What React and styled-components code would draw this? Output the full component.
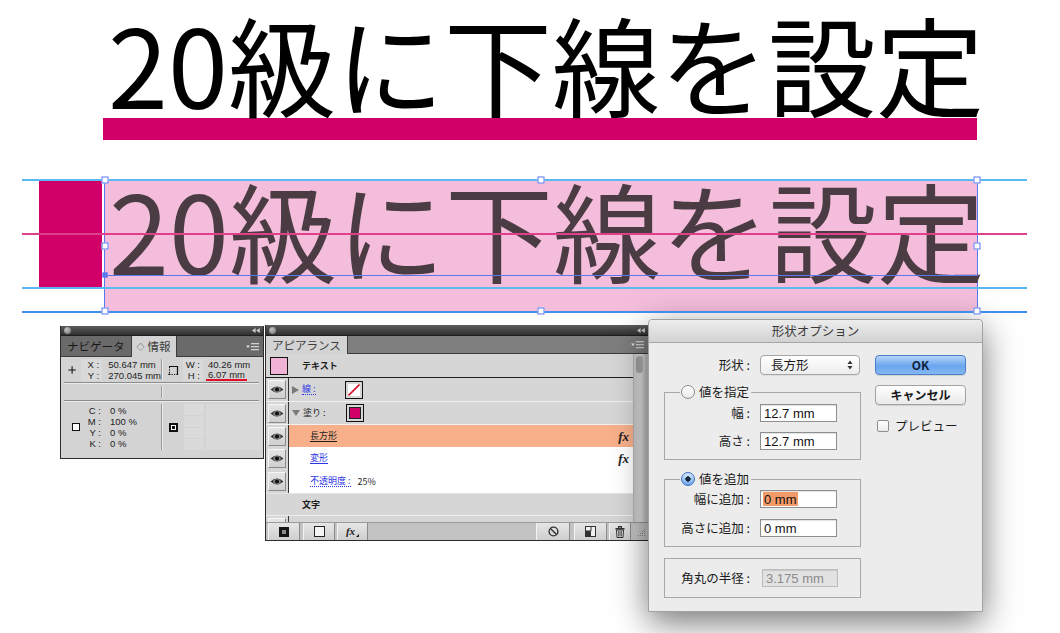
import React from "react"
import styled, { createGlobalStyle } from "styled-components"

const jp = `"Noto Sans CJK JP", "Noto Sans", sans-serif`
const latin = `"Liberation Sans", "Noto Sans CJK JP", sans-serif`

const GlobalStyle = createGlobalStyle`
  * { box-sizing: border-box; }
  html, body { margin: 0; padding: 0; background: #fff; }
  body { font-family: ${jp}; overflow: hidden; }
`

const Page = styled.div`
  width: 1060px;
  height: 633px;
  display: flex;
  flex-direction: column;
  overflow: hidden;
`

/* ---------- heading ---------- */

const Heading = styled.header`
  flex: none;
  height: 170px;
  padding: 0 0 0 103px;
`

const HeadingText = styled.h1`
  margin: 0 0 -6px;
  padding-left: 5px;
  font: 400 108px/124px ${jp};
  color: #000;
  white-space: nowrap;
`

const HeadingBar = styled.div`
  width: 874px;
  height: 22px;
  background: #d10068;
`

/* ---------- artboard ---------- */

const Artboard = styled.div`
  flex: none;
  position: relative;
  height: 148px;
`

const Guide = styled.div`
  position: absolute;
  left: 22px;
  width: 1005px;
  top: ${({ $y }) => $y}px;
  height: 1.5px;
  background: ${({ $color }) => $color};
  z-index: 3;
`

const MarkBlock = styled.div`
  position: absolute;
  left: 39px;
  top: 10px;
  width: 63px;
  height: 107px;
  background: #d10068;
`

const Selection = styled.div`
  position: absolute;
  left: 104px;
  top: 9px;
  width: 874px;
  height: 133px;
  background: #f3bddb;
  border: 1px solid #5a78ee;
`

const SelectionText = styled.div`
  margin: -14px 0 0;
  padding-left: 4px;
  font: 400 108px/124px ${jp};
  color: #4b3c44;
  white-space: nowrap;
`

const Baseline = styled.div`
  position: absolute;
  left: -1px;
  right: -1px;
  top: 95px;
  height: 1px;
  background: #5a78ee;
  z-index: 4;
`

const Handle = styled.span`
  position: absolute;
  left: ${({ $x }) => $x};
  top: ${({ $y }) => $y};
  width: ${({ $filled }) => ($filled ? 5 : 7)}px;
  height: ${({ $filled }) => ($filled ? 5 : 7)}px;
  transform: translate(-50%, -50%);
  background: ${({ $filled }) => ($filled ? "#5a78ee" : "#fff")};
  border: 1px solid #5a78ee;
  z-index: 5;
`

/* ---------- workspace windows ---------- */

const Workspace = styled.div`
  flex: 1;
  position: relative;
`

const Window = styled.section`
  position: absolute;
  left: ${({ $x }) => $x}px;
  top: ${({ $y }) => $y}px;
  width: ${({ $w }) => $w}px;
  height: ${({ $h }) => $h}px;
  display: flex;
  flex-direction: column;
  background: #d3d3d3;
  border: 1px solid #2b2b2b;
  border-top: none;
  overflow: hidden;
`

const WinBar = styled.div`
  flex: none;
  height: ${({ $h }) => $h}px;
  display: flex;
  align-items: center;
  justify-content: space-between;
  padding: 0 3px;
  background: linear-gradient(#5c5c5c, #303030);
  border-bottom: 1px solid #1e1e1e;
`

const WinDot = styled.span`
  width: 7px;
  height: 7px;
  border-radius: 50%;
  background: radial-gradient(circle at 40% 35%, #c4c4c4, #6a6a6a);
`

const TabStrip = styled.div`
  flex: none;
  height: ${({ $h }) => $h}px;
  display: flex;
  align-items: stretch;
  background: ${({ $tone }) => $tone};
  border-bottom: 1px solid #3c3c3c;
`

const Tab = styled.div`
  display: flex;
  align-items: center;
  gap: 3px;
  padding: 1px ${({ $pad }) => $pad}px 0;
  font: 400 11.5px/1 ${jp};
  color: ${({ $active }) => ($active ? "#3c3c3c" : "#161616")};
  background: ${({ $active }) => ($active ? "#d3d3d3" : "transparent")};
  border-right: 1px solid #3c3c3c;
  margin-bottom: ${({ $active }) => ($active ? "-1px" : "0")};
`

const TabFill = styled.div`
  flex: 1;
  display: flex;
  align-items: center;
  justify-content: flex-end;
  padding-right: 4px;
`

const Collapse = () => (
  <svg width="8" height="5" viewBox="0 0 8 5">
    <path d="M3.6 0 L0 2.5 L3.6 5Z M7.8 0 L4.2 2.5 L7.8 5Z" fill="#cfcfcf" />
  </svg>
)

const MenuIcon = () => (
  <svg width="13" height="9" viewBox="0 0 13 9">
    <path d="M0 3.5 h4 l-2 2.4z" fill="#e2e2e2" />
    <rect x="5" y="1" width="8" height="1.3" fill="#d0d0d0" />
    <rect x="5" y="4" width="8" height="1.3" fill="#d0d0d0" />
    <rect x="5" y="7" width="8" height="1.3" fill="#d0d0d0" />
  </svg>
)

/* ---------- info panel ---------- */

const InfoBody = styled.div`
  flex: 1;
  display: flex;
  flex-direction: column;
  font: 400 9.5px/11px ${latin};
  color: #222;
`

const InfoRow = styled.div`
  flex: none;
  display: flex;
  height: ${({ $h }) => $h}px;
`

const InfoCell = styled.div`
  display: flex;
  align-items: center;
  gap: ${({ $gap }) => $gap || 0}px;
  width: ${({ $w }) => ($w ? `${$w}px` : "auto")};
  flex: ${({ $w }) => ($w ? "none" : 1)};
  padding-left: ${({ $pad }) => $pad || 0}px;
`

const VRule = styled.div`
  width: 2px;
  flex: none;
  margin: 2px 0;
  border-left: 1px solid #9a9a9a;
  border-right: 1px solid #ececec;
`

const HRule = styled.div`
  flex: none;
  height: 2px;
  margin: 0 4px 0 3px;
  border-top: 1px solid #8c8c8c;
  border-bottom: 1px solid #ececec;
`

const LabelCol = styled.div`
  width: ${({ $w }) => $w}px;
  flex: none;
  display: flex;
  flex-direction: column;
  align-items: flex-end;
  padding-right: 3px;
  background: ${({ $plain }) => ($plain ? "none" : "#d9d9d9")};
`

const ValueCol = styled.div`
  flex: 1;
  display: flex;
  flex-direction: column;
  padding-left: ${({ $pad }) => $pad || 1}px;
  white-space: nowrap;
`

const RedUnder = styled.span`
  align-self: flex-start;
  margin-left: -2px;
  padding: 0 2px;
  line-height: 9px;
  border-bottom: 2px solid #e0102c;
`

const SwatchGrid = styled.div`
  display: flex;
  gap: 2px;
  align-self: stretch;
  padding: 2px 0;
`

const SmallCells = styled.div`
  width: 20px;
  display: flex;
  flex-direction: column;
  gap: 1px;
`

const SmallCell = styled.div`
  flex: 1;
  background: #dadada;
`

const BigCell = styled.div`
  width: 56px;
  background: #d9d9d9;
`

const PlusIcon = () => (
  <svg width="10" height="10" viewBox="0 0 10 10">
    <path d="M5 0.5 V9.5 M0.5 5 H9.5" stroke="#111" strokeWidth="1.3" />
  </svg>
)

const SizeIcon = () => (
  <svg width="12" height="12" viewBox="0 0 12 12">
    <path d="M1 2.5 H9.5 V11" fill="none" stroke="#111" strokeWidth="1.2" />
    <path d="M1.5 3 V10.5 H9" fill="none" stroke="#111" strokeWidth="1" strokeDasharray="1.2 1.2" />
    <path d="M0 11 L2.5 11 L1.25 9Z" fill="#111" />
  </svg>
)

const FillIcon = () => (
  <svg width="8" height="8" viewBox="0 0 8 8">
    <rect x="0.5" y="0.5" width="7" height="7" fill="#fff" stroke="#111" />
  </svg>
)

const StrokeIcon = () => (
  <svg width="9" height="9" viewBox="0 0 9 9">
    <rect x="0" y="0" width="9" height="9" fill="#111" />
    <rect x="2" y="2" width="5" height="5" fill="#fff" />
    <rect x="3" y="3" width="3" height="3" fill="#111" />
  </svg>
)

/* ---------- appearance panel ---------- */

const AppList = styled.div`
  flex: 1;
  display: flex;
  min-height: 0;
`

const AppRows = styled.div`
  flex: 1;
  display: flex;
  flex-direction: column;
  overflow: hidden;
  font: 400 9px/1 ${jp};
  color: #1d1d1d;
`

const AppRow = styled.div`
  flex: none;
  display: flex;
  height: ${({ $h }) => $h}px;
  background: ${({ $bg }) => $bg || "#d6d6d6"};
  border-bottom: ${({ $rule }) => $rule || "none"};
`

const EyeCell = styled.div`
  width: 23px;
  flex: none;
  display: flex;
  align-items: center;
  justify-content: center;
  background: #d6d6d6;
  border-right: 1px solid #333;
`

const EyeBox = styled.div`
  width: 18px;
  height: 19px;
  display: flex;
  align-items: center;
  justify-content: center;
  background: linear-gradient(#e4e4e4, #cfcfcf);
  border: 1px solid;
  border-color: #f6f6f6 #8a8a8a #8a8a8a #f6f6f6;
`

const SwatchCell = styled.div`
  width: 23px;
  flex: none;
  display: flex;
  align-items: center;
  padding-left: 4px;
`

const RowBody = styled.div`
  flex: 1;
  display: flex;
  align-items: center;
  gap: ${({ $gap }) => $gap || 0}px;
  padding-left: ${({ $indent }) => $indent}px;
  padding-right: 4px;
  font-weight: ${({ $bold }) => ($bold ? 700 : 400)};
`

const Caret = styled.span`
  width: 0;
  height: 0;
  border-style: solid;
  border-color: transparent;
  ${({ $open }) =>
    $open
      ? "border-width: 6px 4px 0 4px; border-top-color: #7a7a7a;"
      : "border-width: 4px 0 4px 7px; border-left-color: #7a7a7a;"}
  margin-right: 3px;
`

const LabelSlot = styled.span`
  width: 43px;
  flex: none;
  display: flex;
`

const AttrLink = styled.span`
  color: ${({ $plain }) => ($plain ? "#1d1d1d" : "#2b33e6")};
  padding-bottom: 1px;
  border-bottom: 1px ${({ $line }) => $line || "none"}
    ${({ $plain }) => ($plain ? "#1d1d1d" : "#2b33e6")};
`

const Swatch = styled.span`
  width: 18px;
  height: 18px;
  flex: none;
  display: flex;
  padding: ${({ $bare }) => ($bare ? 0 : 2)}px;
  background: ${({ $fill }) => $fill || "#d6d6d6"};
  border: 1px solid #111;
`

const SwatchInner = styled.span`
  flex: 1;
  background: ${({ $color }) => $color};
  border: 1px solid #222;
`

const FxMark = styled.span`
  margin-left: auto;
  font: italic 700 13px/1 "Liberation Serif", serif;
  color: #222;
`

const Scrollbar = styled.div`
  width: 12px;
  flex: none;
  padding: 2px 2px 0;
  background: linear-gradient(to right, #c7c7c7, #e2e2e2 60%, #d0d0d0);
  border-left: 1px solid #b5b5b5;
`

const Thumb = styled.div`
  height: 17px;
  border-radius: 4px;
  background: linear-gradient(to right, #9d9d9d, #b8b8b8);
`

const RightEdge = styled.div`
  width: 3px;
  flex: none;
  background: #c9c9c9;
`

const AppFooter = styled.div`
  flex: none;
  height: 18px;
  display: flex;
  align-items: stretch;
  padding: 0 0 0 2px;
  background: #c3c3c3;
  border-top: 1px solid #9a9a9a;
`

const FootBtn = styled.div`
  width: ${({ $w }) => $w}px;
  flex: none;
  display: flex;
  align-items: center;
  justify-content: center;
  margin-right: ${({ $gap }) => $gap ?? 2}px;
  background: ${({ $flat }) => ($flat ? "#c8c8c8" : "linear-gradient(#e6e6e6, #cecece)")};
  border-left: 1px solid ${({ $flat }) => ($flat ? "transparent" : "#f2f2f2")};
  border-right: 1px solid ${({ $flat }) => ($flat ? "transparent" : "#8a8a8a")};
`

const FootGap = styled.div`
  flex: 1;
`

const FootFx = styled.span`
  font: italic 700 11px/1 "Liberation Serif", serif;
  color: #222;
  display: flex;
  align-items: flex-end;
  gap: 1px;
`

const Eye = () => (
  <svg width="14" height="9" viewBox="0 0 14 9">
    <path d="M0.6 4.6 Q7 -1.6 13.4 4.6 Q7 10.4 0.6 4.6Z" fill="#2a2a2a" />
    <ellipse cx="7" cy="4.5" rx="3.8" ry="2.6" fill="#8a8a8a" />
    <circle cx="7" cy="4.5" r="2.1" fill="#111" />
  </svg>
)

const NoStroke = () => (
  <svg width="12" height="12" viewBox="0 0 12 12" style={{ flex: 1 }}>
    <rect width="12" height="12" fill="#fff" />
    <path d="M0.5 11.5 L11.5 0.5" stroke="#d8102a" strokeWidth="1.6" />
  </svg>
)

const IconNewStroke = () => (
  <svg width="10" height="10" viewBox="0 0 10 10">
    <rect width="10" height="10" fill="#151515" />
    <rect x="3" y="3" width="4" height="4" fill="#8c8c8c" />
  </svg>
)

const IconNewFill = () => (
  <svg width="11" height="11" viewBox="0 0 11 11">
    <rect x="0.5" y="0.5" width="10" height="10" fill="#f4f4f4" stroke="#222" />
  </svg>
)

const IconClear = () => (
  <svg width="11" height="11" viewBox="0 0 11 11">
    <circle cx="5.5" cy="5.5" r="4.4" fill="none" stroke="#333" strokeWidth="1.4" />
    <path d="M2.4 2.4 L8.6 8.6" stroke="#333" strokeWidth="1.4" />
  </svg>
)

const IconDuplicate = () => (
  <svg width="11" height="11" viewBox="0 0 11 11">
    <rect x="0.5" y="0.5" width="10" height="10" fill="#f1f1f1" stroke="#333" />
    <rect x="1" y="5" width="5" height="5" fill="#333" />
    <path d="M6 1 V5 H1" fill="none" stroke="#333" />
  </svg>
)

const IconTrash = () => (
  <svg width="10" height="12" viewBox="0 0 10 12">
    <rect x="3.5" y="0.5" width="3" height="1.5" fill="none" stroke="#333" />
    <rect x="0.5" y="2" width="9" height="1.6" fill="#333" />
    <path d="M1.5 4 H8.5 L8 11.5 H2Z" fill="#e8e8e8" stroke="#333" />
    <path d="M3.6 5 V10.5 M5 5 V10.5 M6.4 5 V10.5" stroke="#333" strokeWidth="0.8" />
  </svg>
)

const gripDots = [
  [8, 2], [6, 4], [8, 4], [4, 6], [6, 6], [8, 6], [2, 8], [4, 8], [6, 8], [8, 8],
]

const IconGrip = () => (
  <svg width="10" height="10" viewBox="0 0 10 10">
    {gripDots.map(([x, y]) => (
      <rect key={`${x}-${y}`} x={x} y={y} width="1" height="1" fill="#8a8a8a" />
    ))}
  </svg>
)

const TinyCorner = () => (
  <svg width="3" height="3" viewBox="0 0 3 3">
    <path d="M3 0 V3 H0Z" fill="#222" />
  </svg>
)

/* ---------- shape options dialog ---------- */

const Dialog = styled.section`
  position: absolute;
  left: 648px;
  top: 1px;
  width: 335px;
  height: 293px;
  display: flex;
  flex-direction: column;
  background: #ececec;
  border: 1px solid #a2a2a2;
  border-radius: 4px 4px 0 0;
  box-shadow: 0 10px 34px rgba(0, 0, 0, 0.55);
  font: 400 12.5px/1 ${jp};
  color: #1a1a1a;
`

const DialogTitle = styled.header`
  flex: none;
  height: 23px;
  display: flex;
  align-items: center;
  justify-content: center;
  background: linear-gradient(#ededed, #d2d2d2);
  border-bottom: 1px solid #a6a6a6;
  border-radius: 4px 4px 0 0;
  font-size: 12.5px;
  color: #3a3a3a;
`

const DialogBody = styled.div`
  flex: 1;
  display: flex;
  gap: 14px;
  padding: 12px 0 0 15px;
`

const LeftCol = styled.div`
  width: 197px;
  display: flex;
  flex-direction: column;
`

const RightCol = styled.div`
  width: 91px;
  display: flex;
  flex-direction: column;
`

const FormRow = styled.div`
  display: flex;
  align-items: center;
  height: ${({ $h }) => $h || 18}px;
`

const FieldLabel = styled.span`
  width: ${({ $w }) => $w}px;
  flex: none;
  text-align: right;
  white-space: nowrap;
  margin-right: ${({ $gap }) => $gap || 10}px;
`

const PopUp = styled.div`
  width: 100px;
  height: 20px;
  display: flex;
  align-items: center;
  justify-content: space-between;
  padding: 0 6px 0 10px;
  background: linear-gradient(#ffffff, #ededed);
  border: 1px solid #a6a6a6;
  border-radius: 4px;
  box-shadow: 0 1px 0 rgba(0, 0, 0, 0.06);
`

const Group = styled.fieldset`
  margin: ${({ $mt }) => $mt}px 0 0;
  padding: ${({ $pad }) => $pad};
  border: 1px solid #a9a9a9;
  display: flex;
  flex-direction: column;
  gap: ${({ $gap }) => $gap || 10}px;
  min-width: 0;
`

const GroupLegend = styled.legend`
  display: flex;
  align-items: center;
  gap: 4px;
  padding: 0 2px 0 1px;
  height: 16px;
  font-size: 12.5px;
`

const Radio = styled.span`
  width: 14px;
  height: 14px;
  border-radius: 50%;
  border: 1px solid ${({ $on }) => ($on ? "#3a6cc0" : "#8c8c8c")};
  background: ${({ $on }) =>
    $on
      ? "radial-gradient(circle, #17253d 0 2.4px, transparent 2.9px), linear-gradient(#d4e6fb, #6ea6ee)"
      : "linear-gradient(#ffffff, #ebebeb)"};
`

const Field = styled.div`
  width: ${({ $w }) => $w || 77}px;
  height: 18px;
  display: flex;
  align-items: stretch;
  padding: 1px 2px;
  background: ${({ $disabled }) => ($disabled ? "#e2e2e2" : "#fff")};
  border: 1px solid ${({ $disabled }) => ($disabled ? "#bdbdbd" : "#8f8f8f")};
  box-shadow: inset 0 1px 1px rgba(0, 0, 0, 0.12);
  font: 400 13px/15px ${latin};
  color: ${({ $disabled }) => ($disabled ? "#8a8a8a" : "#111")};
  white-space: nowrap;
`

const FieldText = styled.span`
  padding: 0 1px;
  background: ${({ $selected }) => ($selected ? "#f39b68" : "transparent")};
`

const Button = styled.div`
  height: ${({ $h }) => $h}px;
  margin-top: ${({ $mt }) => $mt || 0}px;
  display: flex;
  align-items: center;
  justify-content: center;
  border-radius: 4px;
  font-weight: 700;
  font-size: 12px;
  ${({ $primary }) =>
    $primary
      ? "background: linear-gradient(#b6d5f9, #6ba5ee 55%, #86b8f3); border: 1px solid #4b7fcc; color: #10223e;"
      : "background: linear-gradient(#ffffff, #e9e9e9); border: 1px solid #a2a2a2; color: #1a1a1a;"}
  box-shadow: 0 1px 1px rgba(0, 0, 0, 0.12);
`

const CheckRow = styled.label`
  display: flex;
  align-items: center;
  gap: 6px;
  margin-top: 15px;
  padding-left: 2px;
`

const CheckBox = styled.span`
  width: 12px;
  height: 12px;
  border: 1px solid #8e8e8e;
  border-radius: 2px;
  background: linear-gradient(#fff, #ececec);
`

const PopArrows = () => (
  <svg width="6" height="10" viewBox="0 0 6 10">
    <path d="M3 0.5 L5.5 4 H0.5Z M3 9.5 L5.5 6 H0.5Z" fill="#333" />
  </svg>
)

/* ---------- assembled ---------- */

const handles = [
  ["0%", "0%"], ["50%", "0%"], ["100%", "0%"],
  ["0%", "50%"], ["100%", "50%"],
  ["0%", "100%"], ["50%", "100%"], ["100%", "100%"],
]

const InfoPanel = () => (
  <Window $x={60} $y={8} $w={204} $h={133}>
    <WinBar $h={10}>
      <WinDot />
      <Collapse />
    </WinBar>
    <TabStrip $h={21} $tone="#6a6a6a">
      <Tab $pad={6}>ナビゲータ</Tab>
      <Tab $pad={5} $active>
        <span style={{ fontSize: 8 }}>◇</span>情報
      </Tab>
      <TabFill>
        <MenuIcon />
      </TabFill>
    </TabStrip>
    <InfoBody>
      <InfoRow $h={25}>
        <InfoCell $w={100} $pad={7} $gap={5}>
          <PlusIcon />
          <LabelCol $w={21}>
            <span>X :</span>
            <span>Y :</span>
          </LabelCol>
          <ValueCol>
            <span>50.647 mm</span>
            <span>270.045 mm</span>
          </ValueCol>
        </InfoCell>
        <VRule />
        <InfoCell $pad={5} $gap={3}>
          <SizeIcon />
          <LabelCol $w={20}>
            <span>W :</span>
            <span>H :</span>
          </LabelCol>
          <ValueCol $pad={2}>
            <span>40.26 mm</span>
            <RedUnder>6.07 mm</RedUnder>
          </ValueCol>
        </InfoCell>
      </InfoRow>
      <HRule />
      <InfoRow $h={16}>
        <InfoCell $w={100} />
        <VRule />
        <InfoCell />
      </InfoRow>
      <HRule />
      <InfoRow $h={50}>
        <InfoCell $w={100} $pad={11} $gap={4}>
          <FillIcon />
          <LabelCol $w={20} $plain>
            <span>C :</span>
            <span>M :</span>
            <span>Y :</span>
            <span>K :</span>
          </LabelCol>
          <ValueCol $pad={2}>
            <span>0 %</span>
            <span>100 %</span>
            <span>0 %</span>
            <span>0 %</span>
          </ValueCol>
        </InfoCell>
        <VRule />
        <InfoCell $pad={6} $gap={6}>
          <StrokeIcon />
          <SwatchGrid>
            <SmallCells>
              <SmallCell />
              <SmallCell />
              <SmallCell />
              <SmallCell />
            </SmallCells>
            <BigCell />
          </SwatchGrid>
        </InfoCell>
      </InfoRow>
    </InfoBody>
  </Window>
)

const EyeCol = () => (
  <EyeCell>
    <EyeBox>
      <Eye />
    </EyeBox>
  </EyeCell>
)

const AppearancePanel = () => (
  <Window $x={265} $y={7} $w={384} $h={216}>
    <WinBar $h={11}>
      <WinDot />
      <Collapse />
    </WinBar>
    <TabStrip $h={18} $tone="#7e7e7e">
      <Tab $pad={6} $active>アピアランス</Tab>
      <TabFill>
        <MenuIcon />
      </TabFill>
    </TabStrip>
    <AppList>
      <AppRows>
        <AppRow $h={24} $rule="1px solid #1e1e1e">
          <SwatchCell>
            <Swatch $bare $fill="#f0b3d6" />
          </SwatchCell>
          <RowBody $indent={13} $bold>
            テキスト
          </RowBody>
        </AppRow>
        <AppRow $h={24} $rule="1px solid #f1f1f1">
          <EyeCol />
          <RowBody $indent={3}>
            <Caret />
            <LabelSlot>
              <AttrLink $line="dotted">線 :</AttrLink>
            </LabelSlot>
            <Swatch>
              <NoStroke />
            </Swatch>
          </RowBody>
        </AppRow>
        <AppRow $h={23} $rule="1px solid #f1f1f1">
          <EyeCol />
          <RowBody $indent={3}>
            <Caret $open />
            <LabelSlot>
              <AttrLink $plain>塗り :</AttrLink>
            </LabelSlot>
            <Swatch>
              <SwatchInner $color="#d10068" />
            </Swatch>
          </RowBody>
        </AppRow>
        <AppRow $h={22} $bg="#f8b08b">
          <EyeCol />
          <RowBody $indent={21}>
            <AttrLink $plain $line="solid">長方形</AttrLink>
            <FxMark>fx</FxMark>
          </RowBody>
        </AppRow>
        <AppRow $h={22} $bg="#fff">
          <EyeCol />
          <RowBody $indent={21}>
            <AttrLink $line="solid">変形</AttrLink>
            <FxMark>fx</FxMark>
          </RowBody>
        </AppRow>
        <AppRow $h={25} $bg="#fff" $rule="1px solid #e4e4e4">
          <EyeCol />
          <RowBody $indent={21} $gap={7}>
            <AttrLink $line="dotted">不透明度 :</AttrLink>
            <span>25%</span>
          </RowBody>
        </AppRow>
        <AppRow $h={22} $rule="1px solid #ededed">
          <RowBody $indent={36} $bold>
            文字
          </RowBody>
        </AppRow>
        <AppRow $h={22}>
          <EyeCol />
          <RowBody $indent={21} />
        </AppRow>
      </AppRows>
      <Scrollbar>
        <Thumb />
      </Scrollbar>
      <RightEdge />
    </AppList>
    <AppFooter>
      <FootBtn $w={32} $gap={3}>
        <IconNewStroke />
      </FootBtn>
      <FootBtn $w={32} $gap={2}>
        <IconNewFill />
      </FootBtn>
      <FootBtn $w={31}>
        <FootFx>
          fx
          <TinyCorner />
        </FootFx>
      </FootBtn>
      <FootGap />
      <FootBtn $w={34} $gap={4}>
        <IconClear />
      </FootBtn>
      <FootBtn $w={33} $gap={2}>
        <IconDuplicate />
      </FootBtn>
      <FootBtn $w={22} $gap={2}>
        <IconTrash />
      </FootBtn>
      <FootBtn $w={15} $gap={0} $flat>
        <IconGrip />
      </FootBtn>
    </AppFooter>
  </Window>
)

const ShapeDialog = () => (
  <Dialog>
    <DialogTitle>形状オプション</DialogTitle>
    <DialogBody>
      <LeftCol>
        <FormRow $h={20}>
          <FieldLabel $w={86}>形状 :</FieldLabel>
          <PopUp>
            <span>長方形</span>
            <PopArrows />
          </PopUp>
        </FormRow>

        <Group $mt={9} $pad="4px 0 9px 15px">
          <GroupLegend>
            <Radio />
            値を指定
          </GroupLegend>
          <FormRow>
            <FieldLabel $w={70}>幅 :</FieldLabel>
            <Field>
              <FieldText>12.7 mm</FieldText>
            </Field>
          </FormRow>
          <FormRow>
            <FieldLabel $w={70}>高さ :</FieldLabel>
            <Field>
              <FieldText>12.7 mm</FieldText>
            </Field>
          </FormRow>
        </Group>

        <Group $mt={11} $pad="3px 0 9px 15px" $gap={11}>
          <GroupLegend>
            <Radio $on />
            値を追加
          </GroupLegend>
          <FormRow>
            <FieldLabel $w={70}>幅に追加 :</FieldLabel>
            <Field>
              <FieldText $selected>0 mm</FieldText>
            </Field>
          </FormRow>
          <FormRow>
            <FieldLabel $w={70}>高さに追加 :</FieldLabel>
            <Field>
              <FieldText>0 mm</FieldText>
            </Field>
          </FormRow>
        </Group>

        <Group $mt={11} $pad="10px 0 10px 15px">
          <FormRow>
            <FieldLabel $w={70} $gap={12}>
              角丸の半径 :
            </FieldLabel>
            <Field $w={76} $disabled>
              <FieldText>3.175 mm</FieldText>
            </Field>
          </FormRow>
        </Group>
      </LeftCol>

      <RightCol>
        <Button $h={20} $primary>
          OK
        </Button>
        <Button $h={20} $mt={10}>
          キャンセル
        </Button>
        <CheckRow>
          <CheckBox />
          プレビュー
        </CheckRow>
      </RightCol>
    </DialogBody>
  </Dialog>
)

const App = () => (
  <>
    <GlobalStyle />
    <Page>
      <Heading>
        <HeadingText>20級に下線を設定</HeadingText>
        <HeadingBar />
      </Heading>

      <Artboard>
        <MarkBlock />
        <Selection>
          <SelectionText>20級に下線を設定</SelectionText>
          <Baseline />
          {handles.map(([x, y]) => (
            <Handle key={`${x}${y}`} $x={x} $y={y} />
          ))}
          <Handle $x="0%" $y="72.5%" $filled />
        </Selection>
        <Guide $y={9} $color="#5cb8f0" />
        <Guide $y={63} $color="#e0408a" />
        <Guide $y={117} $color="#5cb8f0" />
        <Guide $y={141} $color="#3f8fea" />
      </Artboard>

      <Workspace>
        <InfoPanel />
        <AppearancePanel />
        <ShapeDialog />
      </Workspace>
    </Page>
  </>
)

export default App
